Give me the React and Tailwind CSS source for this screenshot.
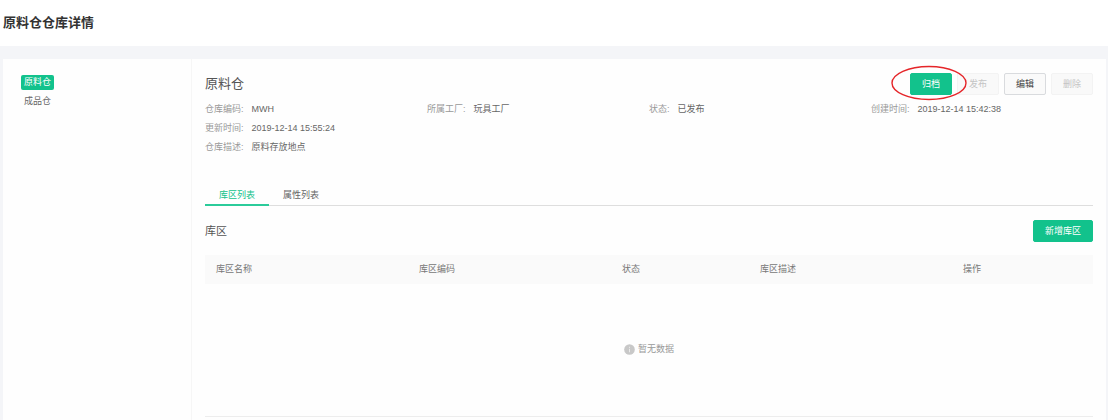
import React from "react";

const details = [
  ["仓库编码", "MWH"],
  ["所属工厂", "玩具工厂"],
  ["状态", "已发布"],
  ["创建时间", "2019-12-14 15:42:38"],
  ["更新时间", "2019-12-14 15:55:24"],
  ["仓库描述", "原料存放地点"],
];

const columns = [
  ["库区名称", "w-[203px]"],
  ["库区编码", "w-[203px]"],
  ["状态", "w-[138px]"],
  ["库区描述", "w-[203px]"],
  ["操作", "w-auto"],
];

const buttonBase = "h-[22px] rounded-[2px] border text-[9px] leading-none";

function Button({ variant, className, children, ...rest }) {
  const look = {
    primary: "border-[#12c28c] bg-[#12c28c] text-white",
    plain: "border-[#d9dbde] bg-[#fafafa] text-[#444]",
    disabled: "border-[#f3f3f3] bg-[#f9f9f9] text-[#c4c4c4]",
  }[variant];
  return (
    <button type="button" className={`${buttonBase} ${look} ${className}`} {...rest}>
      {children}
    </button>
  );
}

function Sidebar() {
  return (
    <nav className="w-[188px] shrink-0 px-[18px] py-[16px] text-[9px] leading-[15px]">
      <ul className="flex flex-col items-start gap-1">
        <li>
          <a href="#raw" aria-current="page" className="block rounded-[2px] bg-[#12c28c] px-[3px] text-white">
            原料仓
          </a>
        </li>
        <li>
          <a href="#finished" className="block px-[3px] text-[#666]">
            成品仓
          </a>
        </li>
      </ul>
    </nav>
  );
}

export default function App() {
  return (
    <div
      lang="zh-CN"
      className="flex min-h-screen flex-col bg-[#f4f5f8] font-['Liberation_Sans','Noto_Sans_CJK_SC',sans-serif] text-[9px] text-[#666]"
    >
      <header className="flex h-[46px] items-center bg-white px-[3px]">
        <h1 className="text-[13px] font-bold leading-5 text-[#333]">原料仓仓库详情</h1>
      </header>

      <div className="mt-[13px] mr-[2px] ml-[3px] flex flex-1 bg-[#fefefe]">
        <Sidebar />

        <main className="min-w-0 flex-1 border-l border-[#f6f6f6] px-[13px] pt-[14px]">
          <div className="flex items-center justify-between">
            <h2 className="text-[13px] leading-5 text-[#555]">原料仓</h2>
            <div className="flex gap-[5px]">
              <div className="relative flex">
                <Button variant="primary" className="w-[42px]">归档</Button>
                <svg
                  aria-hidden="true"
                  viewBox="0 0 76 36"
                  className="pointer-events-none absolute -top-[8px] -left-[19px] z-10 h-[36px] w-[76px] max-w-none"
                >
                  <ellipse cx="38" cy="18" rx="37" ry="16.5" fill="none" stroke="#e52529" strokeWidth="1.4" />
                </svg>
              </div>
              <Button variant="disabled" className="w-[42px]" disabled>发布</Button>
              <Button variant="plain" className="w-[42px]">编辑</Button>
              <Button variant="disabled" className="w-[42px]" disabled>删除</Button>
            </div>
          </div>

          <dl className="mt-[5px] grid grid-cols-4 leading-[19px]">
            {details.map(([label, value], i) => (
              <div key={label} className={i > 3 ? "col-span-4 flex gap-2" : "flex gap-2"}>
                <dt className="text-[#999]">{label}:</dt>
                <dd>{value}</dd>
              </div>
            ))}
          </dl>

          <div role="tablist" className="mt-[28px] flex h-[21px] border-b border-[#dedede]">
            <button
              type="button"
              role="tab"
              aria-selected="true"
              className="-mb-px border-b-2 border-[#2bcb9a] px-[14px] pt-[2px] text-[#12c28c]"
            >
              库区列表
            </button>
            <button type="button" role="tab" aria-selected="false" className="px-[14px] pt-px">
              属性列表
            </button>
          </div>

          <div className="mt-[14px] flex items-center justify-between">
            <h3 className="text-[11px] leading-4 text-[#555]">库区</h3>
            <Button variant="primary" className="w-[60px]">新增库区</Button>
          </div>

          <table className="mt-[13px] w-full table-fixed border-b border-[#ededed] text-left">
            <thead className="bg-[#fafafa]">
              <tr className="h-[29px]">
                {columns.map(([name, width]) => (
                  <th key={name} scope="col" className={`${width} px-[11px] font-normal text-[#777]`}>
                    {name}
                  </th>
                ))}
              </tr>
            </thead>
            <tbody>
              <tr className="h-[132px]">
                <td colSpan={5}>
                  <div className="flex items-center justify-center gap-[3px] text-[#999]">
                    <svg aria-hidden="true" viewBox="0 0 12 12" className="size-[11px]">
                      <circle cx="6" cy="6" r="5.8" fill="#c8c8c8" />
                      <path d="M6 3v1.2M6 5.2v3.8" stroke="#ededed" strokeWidth="1" />
                    </svg>
                    暂无数据
                  </div>
                </td>
              </tr>
            </tbody>
          </table>
        </main>
      </div>
    </div>
  );
}
